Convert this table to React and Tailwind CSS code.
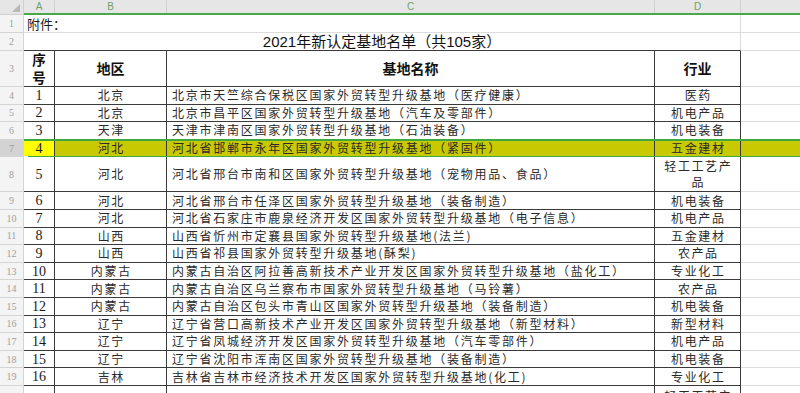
import React from "react";

const rows = [
  { n: "1", r: "北京", name: "北京市天竺综合保税区国家外贸转型升级基地（医疗健康）", ind: "医药" },
  { n: "2", r: "北京", name: "北京市昌平区国家外贸转型升级基地（汽车及零部件）", ind: "机电产品" },
  { n: "3", r: "天津", name: "天津市津南区国家外贸转型升级基地（石油装备）", ind: "机电装备" },
  { n: "4", r: "河北", name: "河北省邯郸市永年区国家外贸转型升级基地（紧固件）", ind: "五金建材", sel: true },
  { n: "5", r: "河北", name: "河北省邢台市南和区国家外贸转型升级基地（宠物用品、食品）", ind: ["轻工工艺产", "品"], tall: true },
  { n: "6", r: "河北", name: "河北省邢台市任泽区国家外贸转型升级基地（装备制造）", ind: "机电装备" },
  { n: "7", r: "河北", name: "河北省石家庄市鹿泉经济开发区国家外贸转型升级基地（电子信息）", ind: "机电产品" },
  { n: "8", r: "山西", name: "山西省忻州市定襄县国家外贸转型升级基地(法兰)", ind: "五金建材" },
  { n: "9", r: "山西", name: "山西省祁县国家外贸转型升级基地(酥梨)", ind: "农产品" },
  { n: "10", r: "内蒙古", name: "内蒙古自治区阿拉善高新技术产业开发区国家外贸转型升级基地（盐化工）", ind: "专业化工" },
  { n: "11", r: "内蒙古", name: "内蒙古自治区乌兰察布市国家外贸转型升级基地（马铃薯）", ind: "农产品" },
  { n: "12", r: "内蒙古", name: "内蒙古自治区包头市青山区国家外贸转型升级基地（装备制造）", ind: "机电装备" },
  { n: "13", r: "辽宁", name: "辽宁省营口高新技术产业开发区国家外贸转型升级基地（新型材料）", ind: "新型材料" },
  { n: "14", r: "辽宁", name: "辽宁省凤城经济开发区国家外贸转型升级基地（汽车零部件）", ind: "机电产品" },
  { n: "15", r: "辽宁", name: "辽宁省沈阳市浑南区国家外贸转型升级基地（装备制造）", ind: "机电装备" },
  { n: "16", r: "吉林", name: "吉林省吉林市经济技术开发区国家外贸转型升级基地(化工)", ind: "专业化工" },
  { n: "", r: "", name: "", ind: ["轻工工艺产", "品"], tall: true, partial: true },
];

const cjk = "font-['Noto_Sans_CJK_SC',sans-serif]";
const rowHead =
  "w-[24px] shrink-0 flex items-center justify-center border-r border-b border-[#d4d4d4] text-[10px] text-[#a0a0a0] font-['Liberation_Serif',serif]";

function DataRow({ row, idx }) {
  const h = row.tall ? "h-[35px]" : "h-[17.6px]";
  const sel = row.sel;
  const dark = "border-r border-b border-[#3a3a3a]";
  const cellBg = sel ? "bg-[#c9c900]" : "bg-white";
  return (
    <div className={`relative flex ${h}`}>
      <div className={`${rowHead} ${sel ? "bg-[#d3d3d3] text-[#6a6a6a]" : "bg-[#f4f4f4]"}`}>
        {row.partial ? "" : idx}
      </div>
      <div
        className={`w-[31px] shrink-0 flex items-center justify-center ${dark} ${
          sel ? "bg-[#ffff00]" : "bg-white"
        } font-['Liberation_Serif',serif] text-[14px] text-[#1a1a1a]`}
      >
        {row.n}
      </div>
      <div
        className={`w-[112px] shrink-0 flex items-center justify-center ${dark} ${cellBg} ${cjk} text-[12px] tracking-[1.7px] text-[#2a2a2a] pl-[1.7px]`}
      >
        {row.r}
      </div>
      <div
        className={`w-[488px] shrink-0 flex items-center justify-start pl-[5px] ${dark} ${cellBg} ${cjk} text-[12px] tracking-[1.75px] text-[#2a2a2a] whitespace-nowrap overflow-hidden`}
      >
        {row.name}
      </div>
      <div
        className={`w-[86px] shrink-0 flex flex-col items-center ${
          row.partial ? "justify-start pt-[2px]" : "justify-center"
        } ${dark} ${cellBg} ${cjk} text-[12px] leading-[16px] tracking-[1.6px] text-[#2a2a2a] pl-[1.6px]`}
      >
        {Array.isArray(row.ind) ? row.ind.map((t, i) => <span key={i}>{t}</span>) : row.ind}
      </div>
      <div className={`flex-1 border-b border-[#dcdcdc] ${sel ? "bg-[#c9c900]" : "bg-white"}`}></div>
      {sel && (
        <>
          <div className="absolute left-[24px] right-0 top-[-1px] bottom-[-1px] border-y-2 border-[#3fa83f] pointer-events-none"></div>
          <div className="absolute left-[24px] bottom-[-3px] w-[4px] h-[4px] bg-[#3fa83f] border border-white"></div>
        </>
      )}
    </div>
  );
}

export default function App() {
  const colHead =
    "shrink-0 flex items-center justify-center border-r border-[#d0d0d0] text-[10px] text-[#6f9f6f] font-['Liberation_Sans',sans-serif]";
  return (
    <div className="w-[800px] h-[393px] overflow-hidden bg-white">
      {/* column header */}
      <div className="flex h-[15px] bg-[#e6e6e6]">
        <div className="relative w-[24px] shrink-0 border-r border-b border-[#cfcfcf] bg-[#e6e6e6]">
          <svg className="absolute left-[12px] top-[4px]" width="8" height="8" viewBox="0 0 8 8">
            <polygon points="8,0 8,8 0,8" fill="#b8b8b8" />
          </svg>
        </div>
        <div className="flex flex-1 border-b-2 border-[#4aa84a]">
          <div className={`${colHead} w-[31px]`}>A</div>
          <div className={`${colHead} w-[112px]`}>B</div>
          <div className={`${colHead} w-[488px]`}>C</div>
          <div className={`${colHead} w-[86px]`}>D</div>
          <div className="flex-1"></div>
        </div>
      </div>
      {/* row 1 */}
      <div className="flex h-[18px]">
        <div className={`${rowHead} bg-[#f4f4f4]`}>1</div>
        <div className={`w-[717px] shrink-0 flex items-center pl-[3px] border-r border-b border-[#dcdcdc] ${cjk} text-[13px] text-[#1a1a1a]`}>
          附件：
        </div>
        <div className="flex-1 border-b border-[#dcdcdc]"></div>
      </div>
      {/* row 2 */}
      <div className="flex h-[18px]">
        <div className={`${rowHead} bg-[#f4f4f4]`}>2</div>
        <div
          className={`w-[717px] shrink-0 flex items-center justify-center border-r border-[#dcdcdc] border-b border-b-[#3a3a3a] font-['Liberation_Sans','Noto_Sans_CJK_SC',sans-serif] text-[15px] leading-[17px] text-[#111]`}
        >
          2021年新认定基地名单（共105家）
        </div>
        <div className="flex-1 border-b border-[#dcdcdc]"></div>
      </div>
      {/* row 3 */}
      <div className="flex h-[36px]">
        <div className={`${rowHead} bg-[#f4f4f4]`}>3</div>
        <div className={`w-[31px] shrink-0 flex flex-col items-center justify-center border-r border-b border-[#3a3a3a] ${cjk} font-bold text-[13.5px] text-[#111]`}>
          <span className="block leading-[17.5px]">序</span>
          <span className="block leading-[17.5px]">号</span>
        </div>
        <div className={`w-[112px] shrink-0 flex items-center justify-center border-r border-b border-[#3a3a3a] ${cjk} font-bold text-[14px] text-[#111]`}>
          地区
        </div>
        <div className={`w-[488px] shrink-0 flex items-center justify-center border-r border-b border-[#3a3a3a] ${cjk} font-bold text-[14px] text-[#111]`}>
          基地名称
        </div>
        <div className={`w-[86px] shrink-0 flex items-center justify-center border-r border-b border-[#3a3a3a] ${cjk} font-bold text-[14px] text-[#111]`}>
          行业
        </div>
        <div className="flex-1 border-b border-[#dcdcdc]"></div>
      </div>
      {rows.map((row, i) => (
        <DataRow key={i} row={row} idx={i + 4} />
      ))}
    </div>
  );
}
